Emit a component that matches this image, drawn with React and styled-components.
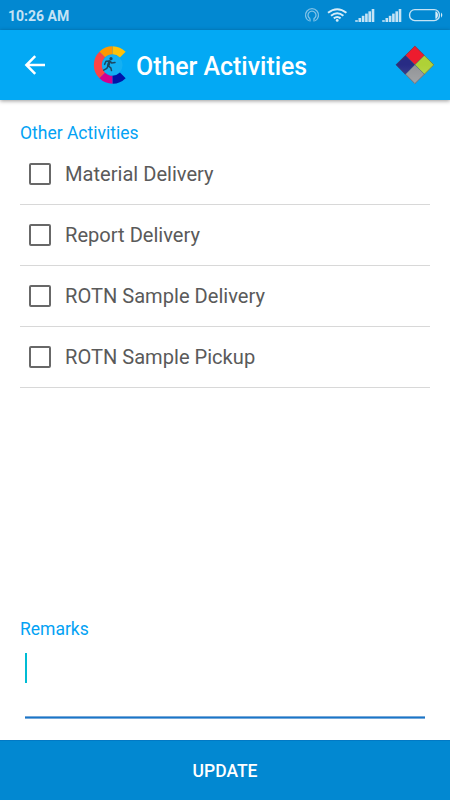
import React, { useState } from "react";
import styled, { createGlobalStyle } from "styled-components";

const GlobalStyle = createGlobalStyle`
  * {
    box-sizing: border-box;
  }

  body {
    margin: 0;
    font-family: Roboto, sans-serif;
    background-color: white;
  }
`;

const Screen = styled.div`
  width: 100%;
  height: 100vh;
  display: flex;
  flex-direction: column;
  overflow: hidden;
`;

const StatusBar = styled.div`
  height: 30px;
  flex-shrink: 0;
  padding: 0 7px 0 8px;
  display: flex;
  align-items: center;
  justify-content: space-between;
  background-color: #0288d1;
`;

const Clock = styled.span`
  font-size: 14px;
  font-weight: 700;
  line-height: 16px;
  padding-top: 1px;
  color: #c5e3f5;
`;

const StatusIcons = styled.svg`
  width: 140px;
  height: 30px;
`;

const AppBar = styled.header`
  height: 70px;
  flex-shrink: 0;
  padding: 0 15px 0 20px;
  display: flex;
  align-items: center;
  background-color: #03a9f4;
  box-shadow: 0 1px 4px rgba(0, 0, 0, 0.4);
`;

const BackButton = styled.button`
  width: 30px;
  height: 30px;
  padding: 0;
  border: none;
  background: none;
  margin-right: 43px;

  svg {
    display: block;
  }
`;

const Title = styled.h1`
  flex: 1;
  margin: 4px 0 0 3px;
  font-size: 24.9px;
  font-weight: 500;
  line-height: 30px;
  color: white;
`;

const Content = styled.main`
  flex: 1;
  padding: 23px 20px 0;
  display: flex;
  flex-direction: column;
`;

const SectionLabel = styled.h2`
  margin: 0;
  font-size: 17.5px;
  font-weight: 400;
  line-height: 21px;
  color: #03a2f4;
`;

const ActivityList = styled.div`
  flex: 1;
`;

const ActivityRow = styled.label`
  height: 61.1px;
  padding-left: 9px;
  display: flex;
  align-items: center;
  border-bottom: 1px solid #d8d8d8;
  font-size: 20.1px;
  color: #5a5a5a;
`;

const Checkbox = styled.input`
  appearance: none;
  width: 22px;
  height: 22px;
  margin: 0 14px 0 0;
  border: 2px solid #686868;
  border-radius: 2px;

  &:checked {
    background-color: #0288d1;
  }
`;

const Remarks = styled.div`
  height: 100px;
  margin: 0 5px;
  display: flex;
  flex-direction: column;
  justify-content: space-between;
`;

const Cursor = styled.div`
  width: 2px;
  height: 30px;
  margin-top: 13px;
  background-color: #00bcd4;
`;

const Underline = styled.div`
  height: 3px;
  margin-bottom: 21px;
  background-color: #1976c8;
  border: solid #77a9da;
  border-width: 1px 0;
`;

const UpdateButton = styled.button`
  height: 60px;
  flex-shrink: 0;
  padding: 0;
  border: none;
  border-top: 1px solid #0279c4;
  background-color: #0288d1;
  font-family: inherit;
  font-size: 17.5px;
  font-weight: 500;
  color: white;
`;

const activities = [
  "Material Delivery",
  "Report Delivery",
  "ROTN Sample Delivery",
  "ROTN Sample Pickup",
];

const SignalBars = ({ x }) => (
  <g fill="#c5e3f5" transform={`translate(${x} 0)`}>
    <rect x="0" y="20" width="2.6" height="2" opacity="0.8" />
    <rect x="3.3" y="18" width="2.6" height="4" />
    <rect x="6.6" y="15.8" width="2.6" height="6.2" />
    <rect x="9.9" y="13.6" width="2.6" height="8.4" />
    <rect x="13.2" y="11.3" width="2.6" height="10.7" />
    <rect x="16.5" y="9" width="2.6" height="13" />
  </g>
);

const StatusGlyphs = () => (
  <StatusIcons viewBox="303 0 140 30" fill="none">
    <g stroke="#7fc1e7" strokeWidth="1.3">
      <path d="M308.8 20.8A6.5 6.5 0 1 1 315.2 20.8" />
      <path d="M310 18.6A4 4 0 1 1 314 18.6V21.5" />
      <path d="M310 18.6V21.5" />
    </g>
    <g stroke="#d6ecf8" strokeWidth="2">
      <path d="M328 12.8Q337.2 5.6 346.4 12.8" />
      <path d="M331 15.8Q337.2 10.8 343.4 15.8" />
      <path d="M333.8 18.4Q337.2 15.7 340.6 18.4" />
      <circle cx="337.2" cy="20.4" r="1.4" fill="#d6ecf8" stroke="none" />
    </g>
    <SignalBars x={355.2} />
    <SignalBars x={382.2} />
    <rect
      x="409.6"
      y="9.6"
      width="29.8"
      height="11"
      rx="5.2"
      stroke="#c5e3f5"
      strokeWidth="1.4"
    />
    <path d="M435.4 11.4H436.4Q438 12.6 438 15.1T436.4 18.8H435.4Z" fill="#d6ecf8" />
    <path d="M441 12.4Q443.6 15.1 441 17.8Z" fill="#d6ecf8" />
  </StatusIcons>
);

const BackArrow = () => (
  <svg width="30" height="30" viewBox="0 0 30 30">
    <path
      d="M25 15H7M15.2 6.2L6.4 15L15.2 23.8"
      fill="none"
      stroke="white"
      strokeWidth="2.5"
    />
  </svg>
);

const RunnerLogo = () => (
  <svg width="40" height="40" viewBox="93 45 40 40">
    <circle cx="112.4" cy="65" r="10.2" fill="#14b0f2" />
    <g fill="none" strokeWidth="8">
      <path d="M112.6 50.2A14.8 14.8 0 0 1 122.8 54.6" stroke="#ffc107" />
      <path d="M102.2 54.5A14.8 14.8 0 0 1 112.6 50.2" stroke="#ff9800" />
      <path d="M102.2 75.5A14.8 14.8 0 0 1 102.2 54.5" stroke="#ff4444" />
      <path d="M112.6 79.8A14.8 14.8 0 0 1 102.2 75.5" stroke="#d5008f" />
      <path d="M122.8 75.4A14.8 14.8 0 0 1 112.6 79.8" stroke="#0014a8" />
    </g>
    <circle cx="111" cy="58.7" r="1.6" fill="#1d4660" />
    <g
      fill="none"
      stroke="#1d4660"
      strokeWidth="1.5"
      strokeLinecap="round"
      strokeLinejoin="round"
    >
      <path d="M104.6 64.4L106 61.3L109.6 60.9L111.6 62.9L115 62.5" />
      <path d="M109 61.5L108.2 65.8L110.8 67.8L111.5 70.6" />
      <path d="M108 66L106.8 68.4L103.7 70.2" />
      <path d="M109.4 61.8L108.3 65.5" strokeWidth="2.6" />
    </g>
  </svg>
);

const DiamondLogo = () => (
  <svg width="40" height="40" viewBox="395 45 40 40">
    <defs>
      <linearGradient id="shade" x1="0" y1="0" x2="0" y2="1">
        <stop offset="0.5" stopColor="white" stopOpacity="0" />
        <stop offset="1" stopColor="white" stopOpacity="0.15" />
      </linearGradient>
    </defs>
    <path d="M414.9 45.8L424.5 55.2L414.9 64.8L405.3 55.2Z" fill="#ed1c2e" />
    <path d="M424.5 55.2L434.2 64.8L424.5 74.4L414.9 64.8Z" fill="#afd136" />
    <path d="M405.3 55.2L414.9 64.8L405.3 74.4L395.7 64.8Z" fill="#282b84" />
    <path d="M414.9 64.8L424.5 74.4L414.9 84L405.3 74.4Z" fill="#929497" />
    <path d="M414.9 45.8L434.2 64.8L414.9 84L395.7 64.8Z" fill="url(#shade)" />
    <g fill="none" stroke="#4c4652" strokeWidth="1">
      <path
        d="M414.9 46.2L433.8 64.8L414.9 83.6L396.1 64.8Z"
        strokeOpacity="0.5"
      />
      <path
        d="M405.3 55.2L424.5 74.4M424.5 55.2L405.3 74.4"
        strokeOpacity="0.4"
      />
    </g>
  </svg>
);

const App = () => {
  const [selected, setSelected] = useState([]);

  const toggle = (name) => {
    setSelected(
      selected.includes(name)
        ? selected.filter((item) => item !== name)
        : [...selected, name]
    );
  };

  return (
    <Screen>
      <GlobalStyle />
      <StatusBar>
        <Clock>10:26 AM</Clock>
        <StatusGlyphs />
      </StatusBar>
      <AppBar>
        <BackButton>
          <BackArrow />
        </BackButton>
        <RunnerLogo />
        <Title>Other Activities</Title>
        <DiamondLogo />
      </AppBar>
      <Content>
        <SectionLabel>Other Activities</SectionLabel>
        <ActivityList>
          {activities.map((name) => (
            <ActivityRow key={name}>
              <Checkbox
                type="checkbox"
                checked={selected.includes(name)}
                onChange={() => toggle(name)}
              />
              {name}
            </ActivityRow>
          ))}
        </ActivityList>
        <SectionLabel>Remarks</SectionLabel>
        <Remarks>
          <Cursor />
          <Underline />
        </Remarks>
      </Content>
      <UpdateButton>UPDATE</UpdateButton>
    </Screen>
  );
};

export default App;
